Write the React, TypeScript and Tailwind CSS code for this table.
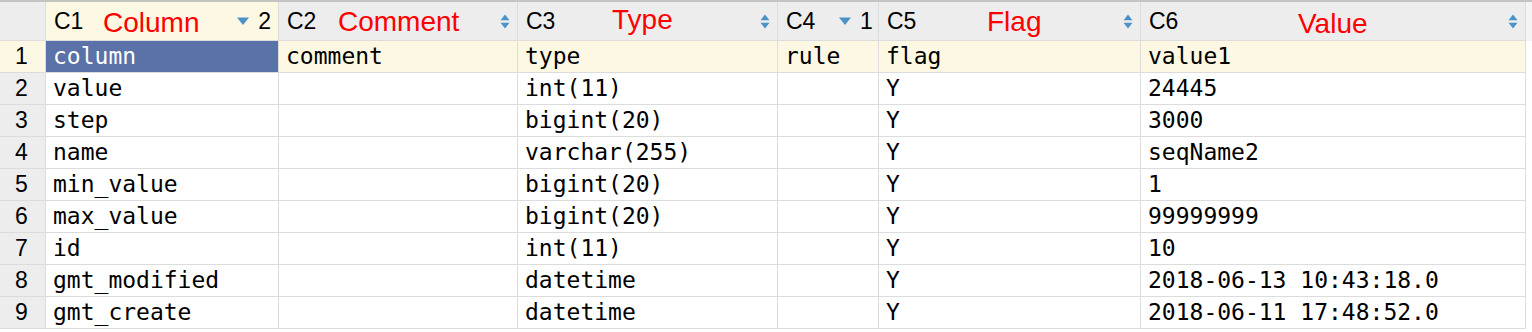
import React from "react";

type Col = {
  id: string;
  label: string;
  width: string;
  labelPad: string;
  labelShift: string;
  sort: "none" | "asc" | "desc";
  order?: number;
  active?: boolean;
};

const columns: Col[] = [
  { id: "C1", label: "Column", width: "w-[233px]", labelPad: "w-[49px]", labelShift: "translate-y-[2px]", sort: "desc", order: 2, active: true },
  { id: "C2", label: "Comment", width: "w-[239px]", labelPad: "w-[51px]", labelShift: "translate-y-[1px]", sort: "none" },
  { id: "C3", label: "Type", width: "w-[260px]", labelPad: "w-[86px]", labelShift: "-translate-y-[1px]", sort: "none" },
  { id: "C4", label: "", width: "w-[101px]", labelPad: "w-[53px]", labelShift: "", sort: "desc", order: 1 },
  { id: "C5", label: "Flag", width: "w-[262px]", labelPad: "w-[100px]", labelShift: "translate-y-[1px]", sort: "none" },
  { id: "C6", label: "Value", width: "w-[385px]", labelPad: "w-[149px]", labelShift: "translate-y-[3px]", sort: "none" },
];

const rows: string[][] = [
  ["column", "comment", "type", "rule", "flag", "value1"],
  ["value", "", "int(11)", "", "Y", "24445"],
  ["step", "", "bigint(20)", "", "Y", "3000"],
  ["name", "", "varchar(255)", "", "Y", "seqName2"],
  ["min_value", "", "bigint(20)", "", "Y", "1"],
  ["max_value", "", "bigint(20)", "", "Y", "99999999"],
  ["id", "", "int(11)", "", "Y", "10"],
  ["gmt_modified", "", "datetime", "", "Y", "2018-06-13 10:43:18.0"],
  ["gmt_create", "", "datetime", "", "Y", "2018-06-11 17:48:52.0"],
];

function SortBoth() {
  return (
    <svg width="10" height="15" viewBox="0 0 10 15" className="shrink-0">
      <path d="M5 0.5 L9.5 6.3 L0.5 6.3 Z" fill="#4b93c6" />
      <path d="M0.5 8.7 L9.5 8.7 L5 14.5 Z" fill="#4b93c6" />
    </svg>
  );
}

function SortDown() {
  return (
    <svg width="12" height="9" viewBox="0 0 12 9" className="shrink-0">
      <path d="M0 0.5 L12 0.5 L6 8 Z" fill="#4b93c6" />
    </svg>
  );
}

export default function App() {
  const sans = "font-['Liberation_Sans',Arial,sans-serif]";
  const mono = "font-['DejaVu_Sans_Mono',Menlo,monospace]";

  return (
    <div className="h-[332px] w-[1532px] overflow-hidden border-t-2 border-[#c4c4c4] bg-white">
      <div className="flex h-[39px] w-[1532px] bg-[#f4f4f4]">
        <div className="h-full w-[46px] shrink-0 border-r border-b border-[#dcdcdc] bg-[#ededed]" />
        {columns.map((col) => (
          <div
            key={col.id}
            className={`${col.width} flex h-full shrink-0 items-center border-r border-b border-[#dcdcdc] pl-[8px] pr-[7px] ${
              col.active ? "bg-[#fdf8e3]" : "bg-[#ededed]"
            }`}
          >
            <span className={`${col.labelPad} ${sans} shrink-0 text-[23px] leading-none text-black`}>
              {col.id}
            </span>
            {col.label && (
              <span className={`${sans} ${col.labelShift} text-[28px] leading-none text-[#ff0000]`}>
                {col.label}
              </span>
            )}
            <div className="ml-auto flex items-center gap-[9px]">
              {col.sort === "none" ? <SortBoth /> : <SortDown />}
              {col.order && (
                <span className={`${sans} text-[23px] leading-none text-black`}>{col.order}</span>
              )}
            </div>
          </div>
        ))}
      </div>

      {rows.map((row, i) => {
        const first = i === 0;
        return (
          <div key={i} className="flex h-[32px] w-[1526px]">
            <div
              className={`flex w-[46px] shrink-0 items-center justify-center border-r border-b border-[#dcdcdc] pr-[2px] ${sans} text-[23px] text-black ${
                first ? "bg-[#fdf8e3]" : "bg-[#ededed]"
              }`}
            >
              {i + 1}
            </div>
            {row.map((cell, j) => {
              const selected = first && j === 0;
              return (
                <div
                  key={j}
                  className={`${columns[j].width} flex shrink-0 items-center whitespace-nowrap border-r border-b border-[#dcdcdc] pl-[7px] ${mono} text-[23px] leading-[27px] ${
                    selected
                      ? "bg-[#5a72a8] text-white"
                      : first
                        ? "bg-[#fdf8e3] text-black"
                        : "bg-white text-black"
                  }`}
                >
                  {cell}
                </div>
              );
            })}
          </div>
        );
      })}
    </div>
  );
}
